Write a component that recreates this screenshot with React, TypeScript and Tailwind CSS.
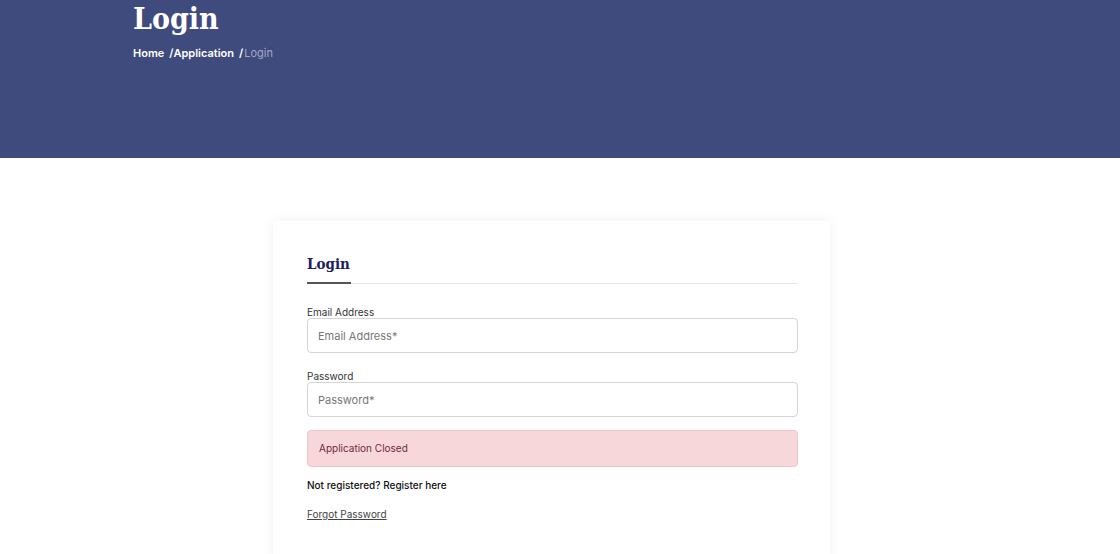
import React from 'react';

const serif = { fontFamily: '"DejaVu Serif Condensed", "DejaVu Serif", "Liberation Serif", serif' };

function Banner() {
  return (
    <div className="h-[158px] bg-[#3f4a7d]">
      <div className="pl-[133px] pt-[1px]">
        <h1 className="text-[30px] font-bold leading-[36px] text-white" style={serif}>
          Login
        </h1>
        <div className="mt-[9px] flex items-center text-[11px] font-semibold leading-[14px] text-white">
          <span>Home</span>
          <span className="ml-[5px]">/</span>
          <span>Application</span>
          <span className="ml-[5px] mr-[1px]">/</span>
          <span className="font-normal text-[#a3a8c4]">Login</span>
        </div>
      </div>
    </div>
  );
}

function Field({ label, placeholder, type }: { label: string; placeholder: string; type: string }) {
  return (
    <div>
      <label className="block text-[10px] leading-[12px] text-[#333]">{label}</label>
      <input
        type={type}
        placeholder={placeholder}
        className="block h-[35px] w-full rounded-[4px] border border-[#d4d4d4] bg-white px-[10px] text-[11px] text-[#333] placeholder:text-[#777] focus:outline-none"
      />
    </div>
  );
}

export default function App() {
  return (
    <div className="min-h-[554px] bg-white" style={{ fontFamily: 'Inter, "Noto Sans", sans-serif' }}>
      <Banner />
      <div className="mt-[63px] flex w-[1103px] justify-center">
        <div className="w-[557px] bg-white pb-[40px] pl-[34px] pr-[32px] pt-[33px] shadow-[0_0_12px_rgba(0,0,0,0.06)]">
          <h2 className="text-[15px] font-bold leading-[20px] text-[#1c205c]" style={serif}>
            Login
          </h2>
          <div className="relative mt-[9px] h-[1px] bg-[#e6e6e6]">
            <div className="absolute left-0 top-[-1px] h-[2px] w-[44px] bg-[#555]" />
          </div>
          <div className="mt-[22px] flex flex-col gap-[17px]">
            <Field label="Email Address" placeholder="Email Address*" type="email" />
            <Field label="Password" placeholder="Password*" type="password" />
          </div>
          <div className="mt-[13px] flex h-[37px] items-center rounded-[4px] border border-[#f1c5ca] bg-[#f8d7da] px-[11px] text-[10px] text-[#6e2a35]">
            Application Closed
          </div>
          <p className="mt-[12px] text-[10px] font-medium leading-[13px] text-[#111]">
            Not registered? Register here
          </p>
          <a href="#" className="mt-[16px] inline-block text-[10px] leading-[13px] text-[#444] underline">
            Forgot Password
          </a>
        </div>
      </div>
    </div>
  );
}
